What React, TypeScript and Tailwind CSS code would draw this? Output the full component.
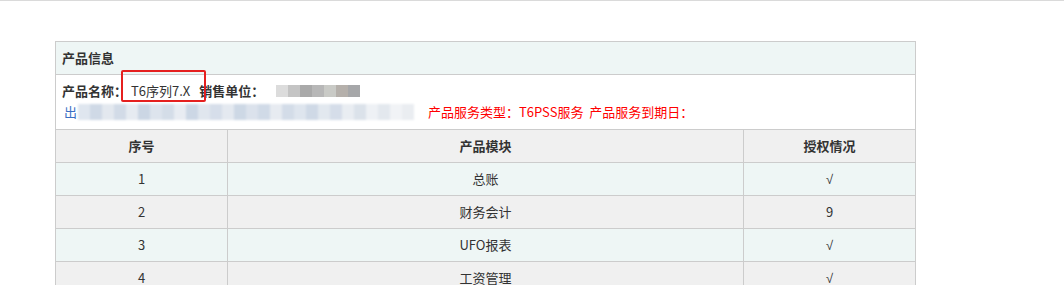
import React from 'react';

const rows = [
  { no: '1', name: '总账', auth: '√' },
  { no: '2', name: '财务会计', auth: '9' },
  { no: '3', name: 'UFO报表', auth: '√' },
  { no: '4', name: '工资管理', auth: '√' },
];

const grayMosaic = ['bg-[#dcdcdc]', 'bg-[#c4c4c4]', 'bg-[#a9a9a9]', 'bg-[#b7b7b7]', 'bg-[#c9cac6]', 'bg-[#b5b0ab]', 'bg-[#a6a7a9]'];

const blueMosaic = [
  'bg-[#dfe6ef]', 'bg-[#cfd9e6]', 'bg-[#e3e8ef]', 'bg-[#d2dbe7]', 'bg-[#e6ebf1]', 'bg-[#cbd6e4]',
  'bg-[#dde4ed]', 'bg-[#d4dde8]', 'bg-[#e8ecf2]', 'bg-[#ccd7e5]', 'bg-[#e0e6ee]', 'bg-[#d6deea]',
  'bg-[#e4e9f0]', 'bg-[#cdd8e5]', 'bg-[#dbe2ec]', 'bg-[#d0dae7]', 'bg-[#e7ebf1]', 'bg-[#d3dce8]',
  'bg-[#dee5ee]', 'bg-[#cfd9e6]', 'bg-[#e2e8ef]', 'bg-[#d5dde9]', 'bg-[#e9edf2]', 'bg-[#dbe2ea]',
  'bg-[#eef1f5]', 'bg-[#e3e8ee]', 'bg-[#f1f3f6]', 'bg-[#eaedf1]',
];

function Auth({ value }: { value: string }) {
  if (value === '√') {
    return <span style={{ fontFamily: '"Liberation Sans", Arial, sans-serif' }}>√</span>;
  }
  return <>{value}</>;
}

export default function App() {
  return (
    <div
      className="w-[1064px] h-[285px] overflow-hidden bg-white border-t border-[#dadada] text-[13px] text-[#333]"
      style={{ fontFamily: '"Noto Sans CJK SC", "Microsoft YaHei", sans-serif' }}
    >
      <div className="pt-[40px] pl-[55px]">
        <table className="w-[860px] border-collapse table-fixed">
          <colgroup>
            <col className="w-[172px]" />
            <col className="w-[516px]" />
            <col className="w-[172px]" />
          </colgroup>
          <tbody>
            {/* 产品信息 */}
            <tr className="h-[33px] bg-[#eef6f5]">
              <td colSpan={3} className="border border-[#cccccc] px-[6px] font-bold leading-[20px]">
                产品信息
              </td>
            </tr>

            {/* 名称 / 销售单位 / 服务 */}
            <tr className="h-[55px] bg-white">
              <td colSpan={3} className="border border-[#cccccc] px-[6px] align-top pt-[5px]">
                <div className="relative flex items-center h-[22px] leading-[22px]">
                  <span className="font-bold">产品名称：</span>
                  <span className="ml-[4px]">T6序列7.X</span>
                  <span className="ml-[9px] font-bold">销售单位：</span>
                  <span className="flex h-[12px] ml-[12px]">
                    {grayMosaic.map((c, i) => (
                      <span key={i} className={`w-[12px] h-[12px] ${c}`} />
                    ))}
                  </span>
                  {/* annotation box */}
                  <span className="absolute z-10 left-[59px] top-[-10px] w-[85px] h-[32px] border-2 border-[#e5201f] rounded-[2px]" />
                </div>
                <div className="flex items-center h-[20px] leading-[20px] pl-[2px]">
                  <span className="text-[#3b6fc4]">出</span>
                  <span className="flex h-[16px] ml-[1px] blur-[1px]">
                    {blueMosaic.map((c, i) => (
                      <span key={i} className={`w-[12px] h-[16px] ${c}`} />
                    ))}
                  </span>
                  <span className="ml-[14px] text-[#ff0000]">产品服务类型：T6PSS服务&nbsp;&nbsp;产品服务到期日：</span>
                </div>
              </td>
            </tr>

            {/* 表头 */}
            <tr className="h-[33px] bg-[#f0f0f0] font-bold">
              <td className="border border-[#cccccc] text-center">序号</td>
              <td className="border border-[#cccccc] text-center">产品模块</td>
              <td className="border border-[#cccccc] text-center">授权情况</td>
            </tr>

            {rows.map((r, i) => (
              <tr key={r.no} className={`h-[33px] ${i % 2 === 0 ? 'bg-[#eef6f5]' : 'bg-[#f0f0f0]'}`}>
                <td className="border border-[#cccccc] text-center">{r.no}</td>
                <td className="border border-[#cccccc] text-center">{r.name}</td>
                <td className="border border-[#cccccc] text-center">
                  <Auth value={r.auth} />
                </td>
              </tr>
            ))}
          </tbody>
        </table>
      </div>
    </div>
  );
}
